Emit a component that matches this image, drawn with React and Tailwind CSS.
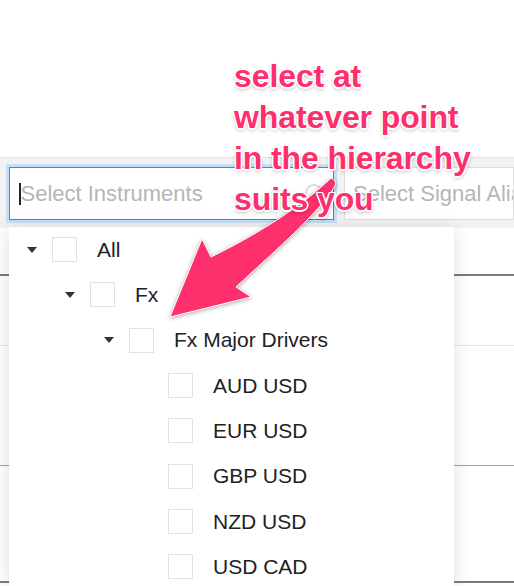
import React from "react";

// instrument tree shown in the open dropdown
const treeRows = [
  { label: "All", pad: "pl-[18px]", open: true },
  { label: "Fx", pad: "pl-[56px]", open: true },
  { label: "Fx Major Drivers", pad: "pl-[95px]", open: true },
  { label: "AUD USD", pad: "pl-[134px]" },
  { label: "EUR USD", pad: "pl-[134px]" },
  { label: "GBP USD", pad: "pl-[134px]" },
  { label: "NZD USD", pad: "pl-[134px]" },
  { label: "USD CAD", pad: "pl-[134px]" },
];

const Caret = () => (
  <svg width="10" height="6" viewBox="0 0 10 6" className="shrink-0">
    <path d="M0 0 L10 0 L5 6 Z" fill="#333" />
  </svg>
);

const TreeRow = ({ row }) => (
  <div className={`flex h-[45.3px] items-center ${row.pad}`}>
    <div className="w-[10px] flex justify-center">{row.open && <Caret />}</div>
    <div className="ml-[15px] w-[25px] h-[25px] border border-[#e1e1e1] bg-white shrink-0" />
    <span className="ml-[20px] text-[21px] text-[#222]">{row.label}</span>
  </div>
);

const App = () => {
  return (
    <div className="relative w-[514px] h-[586px] overflow-hidden bg-white font-['Liberation_Sans',Arial,sans-serif] flex flex-col">
      {/* empty header area */}
      <div className="h-[157px] shrink-0" />

      {/* filter toolbar */}
      <div className="h-[71px] shrink-0 border-t border-[#e2e4e8] bg-[#f2f2f3] flex gap-[10px] pl-[9px] pt-[9px]">
        <div className="w-[325px] h-[53px] bg-white border border-[#2d8ef0] ring-[3px] ring-[#c6def6] flex items-center pl-[9px] relative">
          <span className="w-[1.5px] h-[22px] bg-[#222]" />
          <span className="text-[22px] text-[#b5b5b5]">Select Instruments</span>
          <span className="absolute right-[10px] top-[16px] w-[18px] h-[18px] rounded-full border-2 border-[#dadada]" />
        </div>
        <div className="flex-1 h-[53px] bg-white border border-[#dedede] flex items-center pl-[8px] overflow-hidden whitespace-nowrap">
          <span className="text-[22px] text-[#b5b5b5]">Select Signal Alias</span>
        </div>
      </div>

      {/* grid underneath the dropdown */}
      <div className="flex flex-col">
        <div className="h-[48px] border-b-2 border-[#7b7b7b]" />
        <div className="h-[70px] border-b border-[#e6e6e6]" />
        <div className="h-[120px] border-b border-[#4cd964]" />
        <div className="h-[117px] border-b-2 border-[#7b7b7b]" />
      </div>

      {/* open dropdown tree */}
      <div className="absolute left-[9px] top-[227px] w-[445px] bottom-0 bg-white shadow-[0_2px_18px_rgba(0,0,0,0.13)]">
        {treeRows.map((row) => (
          <TreeRow key={row.label} row={row} />
        ))}
      </div>

      {/* callout arrow */}
      <svg className="absolute inset-0 pointer-events-none drop-shadow-[0_1px_2px_rgba(0,0,0,0.35)]" width="514" height="586" viewBox="0 0 514 586">
        <path
          d="M331 178 Q337 180 335 186 C316 216 280 246 236 287 L251 297 L170 317 L202 239 L211 257 C254 236 300 208 331 178 Z"
          fill="#fd2f6c"
          stroke="#fff"
          strokeWidth="1"
          strokeLinejoin="round"
        />
      </svg>

      {/* callout text */}
      <div className="absolute left-[234px] top-[56px] text-[32px] leading-[41px] font-bold text-[#fd2f6c] tracking-[-0.1px] [text-shadow:1.5px_0_0_#fff,-1.5px_0_0_#fff,0_1.5px_0_#fff,0_-1.5px_0_#fff,1px_1px_0_#fff,-1px_-1px_0_#fff,1px_-1px_0_#fff,-1px_1px_0_#fff,0_2px_4px_rgba(0,0,0,0.35)]">
        <div>select at</div>
        <div>whatever point</div>
        <div>in the hierarchy</div>
        <div>suits you</div>
      </div>
    </div>
  );
};

export default App;
